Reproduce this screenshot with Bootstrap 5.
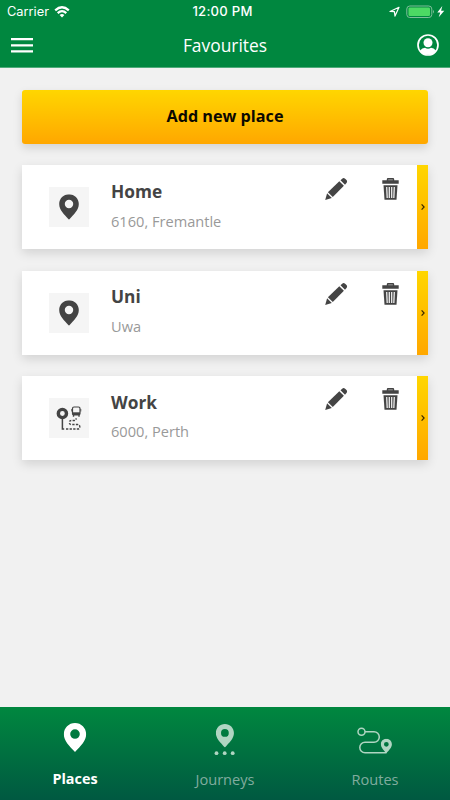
<!DOCTYPE html>
<html lang="en">
<head>
<meta charset="utf-8">
<meta name="viewport" content="width=device-width, initial-scale=1">
<title>Favourites</title>
<link href="https://cdn.jsdelivr.net/npm/bootstrap@5.3.0/dist/css/bootstrap.min.css" rel="stylesheet">
<style>
  body { background: #f1f1f1; font-family: "Open Sans", sans-serif; height: 800px; overflow: hidden; }
  svg { display: block; flex: none; }
  .app-header { background: #00873f; height: 68px; border-bottom: 1px solid #4fab7a; }
  .status-bar { height: 23px; font: 400 12.8px/23px Inter, sans-serif; padding: 0 5px 0 7px; }
  .status-bar > div { flex: 1 1 0; }
  .status-time { font-weight: 500; font-size: 13.1px; letter-spacing: .25px; padding-right: 7px; }
  .wifi { margin-left: 5px; }
  .title-bar { height: 44px; padding: 0 11px; }
  .title-bar h1 { font-size: 17.4px; font-weight: 400; line-height: 24px; }
  .icon-btn { border: 0; padding: 0; background: none; }
  .content { padding: 21.6px 22px 0; gap: 21.5px; }
  .btn-add { height: 54px; border: 0; border-radius: 3px; color: #0c0900; font-size: 16.2px; font-weight: 700;
    background: linear-gradient(#ffd600, #ffa700); box-shadow: 0 4px 10px rgba(0,0,0,.13); padding: 0; }
  .btn-add + .place { margin-top: .4px; }
  .place { height: 83.8px; border: 0; border-radius: 0; background: #fff; box-shadow: 0 4px 10px rgba(0,0,0,.13); }
  .place-thumb { background: #f5f5f5; margin: 21.800px 22px 0 27px; }
  .place-name { font-size: 17.3px; line-height: 24px; font-weight: 700; color: #444; margin: 14.5px 0 0; }
  .place-sub { font-size: 14.6px; line-height: 20px; color: #999; margin: 6.800px 0 0; }
  .place-actions { margin: 12.3px 18px 0 0; gap: 34px; }
  .place-open { width: 11px; background: linear-gradient(#ffd600, #ffa700); }
  .tab-bar { height: 93px; background: linear-gradient(#00873f, #005941); }
  .tab-item { color: #80ac9f; font-size: 14.6px; line-height: 20px; padding-top: 13px; }
  .tab-item.active { color: #fff; font-weight: 700; font-size: 14.4px; }
  .tab-item svg { margin-bottom: 8.800px; color: #b0d5c2; }
  .tab-item.active svg { color: #fff; }
</style>
</head>
<body class="d-flex flex-column">
<svg width="0" height="0" class="position-absolute" aria-hidden="true">
  <symbol id="pin" viewBox="0 0 20 26"><path fill="currentColor" fill-rule="evenodd" d="M10 0C4.400 0 0 4.400 0 10c0 6 5 10.500 10 16 5-5.500 10-10 10-16C20 4.400 15.600 0 10 0Zm0 5.600a4.300 4.300 0 1 1 0 8.600 4.300 4.300 0 0 1 0-8.600Z"/></symbol>
  <symbol id="pencil" viewBox="0 0 22 22"><g fill="#444"><path d="M2.900 14.200 14.300 3.200l4.600 4.600L7.800 19.100Z"/><path d="m15.500 2.300 1.700-1.600q1.400-1.200 2.900 0l1.400 1.300q1.200 1.500 0 2.900l-1.500 1.900Z"/><path d="m2.100 15.200 4.700 4.700L.2 22Z"/></g></symbol>
  <symbol id="trash" viewBox="0 0 17 22"><path fill="#444" d="M.3 2.300h4.500V1.200Q4.800 0 6 0h5q1.200 0 1.200 1.200v1.100h4.500v3.500H.3Z"/><path fill="#999" d="M6.200 1.300h4.600v1H6.200Z"/><path fill="#444" d="M1.500 7.300h14l-1 14.500h-12Z"/><path stroke="#eee" stroke-width="1.300" d="m4.700 9 .5 11M7.300 9v11M9.700 9v11M12.300 9l-.5 11"/></symbol>
  <symbol id="chevron" viewBox="0 0 4 6"><path fill="none" stroke="#3c2a00" stroke-width="1.200" d="m.6.400 2.500 2.600L.6 5.600"/></symbol>
</svg>

<header class="app-header text-white flex-shrink-0">
  <div class="status-bar d-flex align-items-center">
    <div class="d-flex align-items-center">
      <span>Carrier</span>
      <svg class="wifi" width="16" height="12" viewBox="0 0 16 12"><g fill="none" stroke="#fff" stroke-width="2.200"><path d="M1.200 4.400Q8-1.900 14.800 4.400"/><path d="M3.700 7.100Q8 3.100 12.300 7.100"/></g><path fill="#fff" d="M5.600 9Q8 6.900 10.400 9L8 11.500Z"/></svg>
    </div>
    <div class="status-time text-center text-nowrap">12:00 PM</div>
    <div class="d-flex align-items-center justify-content-end">
      <svg width="56" height="14" viewBox="389 4.500 56 14"><path fill="none" stroke="#fff" stroke-width="1.200" stroke-linejoin="round" d="m390 11 9-4.200-4 8.800-.6-4.500Z"/><rect x="406.800" y="5.500" width="25" height="11.500" rx="3" fill="none" stroke="#7fbf9a"/><rect x="408.500" y="7" width="21.500" height="8.500" rx="1.300" fill="#4cd964"/><path fill="#7fbf9a" d="M433 9.500q2 1.700 0 3.500Z"/><path fill="#fff" d="m442.300 5.500-5 6.400h2.900l-1.500 4.900 5.600-6.500h-3.200Z"/></svg>
    </div>
  </div>
  <div class="title-bar d-flex align-items-center justify-content-between">
    <button class="icon-btn" aria-label="Menu"><svg width="22" height="16" viewBox="0 0 22 16"><path stroke="#fff" stroke-width="2.200" d="M0 2.200h22M0 8.300h22M0 14.400h22"/></svg></button>
    <h1 class="m-0">Favourites</h1>
    <button class="icon-btn" aria-label="Account"><svg width="22" height="22" viewBox="0 0 22 22"><circle cx="11" cy="11" r="10" fill="none" stroke="#fff" stroke-width="1.700"/><circle cx="11" cy="8.700" r="4.500" fill="#fff"/><path fill="#fff" d="M3.200 16.500Q5 14 8 13.800q3 1.800 6 0 3 .2 4.800 2.700Q16 20.800 11 20.800T3.200 16.500Z"/></svg></button>
  </div>
</header>

<main class="content d-flex flex-column flex-grow-1">
  <button class="btn btn-add w-100">Add new place</button>

  <article class="card place flex-row">
    <div class="place-thumb align-self-start"><svg width="40" height="40" viewBox="0 0 40 40"><use href="#pin" x="10" y="7.200" width="20" height="25.500" color="#444"/></svg></div>
    <div class="flex-grow-1"><h2 class="place-name">Home</h2><p class="place-sub">6160, Fremantle</p></div>
    <div class="place-actions d-flex align-items-start">
      <button class="icon-btn" aria-label="Edit Home"><svg width="24" height="22"><use href="#pencil"/></svg></button>
      <button class="icon-btn" aria-label="Delete Home"><svg width="17" height="22"><use href="#trash"/></svg></button>
    </div>
    <div class="place-open d-flex align-items-center justify-content-center"><svg width="4" height="6"><use href="#chevron"/></svg></div>
  </article>

  <article class="card place flex-row">
    <div class="place-thumb align-self-start"><svg width="40" height="40" viewBox="0 0 40 40"><use href="#pin" x="10" y="7.200" width="20" height="25.500" color="#444"/></svg></div>
    <div class="flex-grow-1"><h2 class="place-name">Uni</h2><p class="place-sub">Uwa</p></div>
    <div class="place-actions d-flex align-items-start">
      <button class="icon-btn" aria-label="Edit Uni"><svg width="24" height="22"><use href="#pencil"/></svg></button>
      <button class="icon-btn" aria-label="Delete Uni"><svg width="17" height="22"><use href="#trash"/></svg></button>
    </div>
    <div class="place-open d-flex align-items-center justify-content-center"><svg width="4" height="6"><use href="#chevron"/></svg></div>
  </article>

  <article class="card place flex-row">
    <div class="place-thumb align-self-start"><svg width="40" height="40" viewBox="0 0 40 40"><g fill="none" stroke="#444"><circle cx="13.400" cy="15.500" r="4.100" stroke-width="3.400"/><path stroke-width="1.500" d="M13.400 20v11h1.800"/><path stroke-width="1.400" stroke-dasharray="2.300 1.300" d="M17 31h11.500q2.300 0 2.300-2.200t-2.300-2.300h-6q-2.200 0-2.200-2t2.200-2h2.800q1.800 0 1.800-2.300"/><rect x="23.500" y="9" width="7.500" height="8" rx="1.500" stroke-width="1.200"/><path stroke-width=".8" d="M22.700 11v2.500M31.800 11v2.500"/><path stroke-width="1.400" d="M24.500 17v1.800M30 17v1.800"/></g><path fill="#444" d="M23.500 14.300h7.500V17h-7.500Z"/></svg></div>
    <div class="flex-grow-1"><h2 class="place-name">Work</h2><p class="place-sub">6000, Perth</p></div>
    <div class="place-actions d-flex align-items-start">
      <button class="icon-btn" aria-label="Edit Work"><svg width="24" height="22"><use href="#pencil"/></svg></button>
      <button class="icon-btn" aria-label="Delete Work"><svg width="17" height="22"><use href="#trash"/></svg></button>
    </div>
    <div class="place-open d-flex align-items-center justify-content-center"><svg width="4" height="6"><use href="#chevron"/></svg></div>
  </article>
</main>

<nav class="tab-bar d-flex flex-shrink-0">
  <a href="#" class="tab-item active d-flex flex-column align-items-center flex-fill w-100 text-decoration-none">
    <svg width="40" height="40" viewBox="55 720 40 40"><use href="#pin" x="63.500" y="723" width="23" height="29"/></svg>Places</a>
  <a href="#" class="tab-item d-flex flex-column align-items-center flex-fill w-100 text-decoration-none">
    <svg width="40" height="40" viewBox="205 720 40 40"><use href="#pin" x="215.800" y="724" width="18.200" height="23.500"/><g fill="currentColor"><circle cx="216.500" cy="753.200" r="1.900"/><circle cx="224.700" cy="753.200" r="1.900"/><circle cx="232.700" cy="753.200" r="1.900"/></g></svg>Journeys</a>
  <a href="#" class="tab-item d-flex flex-column align-items-center flex-fill w-100 text-decoration-none">
    <svg width="40" height="40" viewBox="355 720 40 40"><g fill="none" stroke="currentColor" stroke-width="1.500"><circle cx="361.500" cy="731.700" r="3.500"/><path d="M365 731.700h9a5.300 5.300 0 0 1 0 10.600h-9a5.200 5.200 0 0 0 0 10.400h21.500"/></g><use href="#pin" x="380.700" y="738.800" width="11.300" height="14.400"/></svg>Routes</a>
</nav>
<script src="https://cdn.jsdelivr.net/npm/bootstrap@5.3.0/dist/js/bootstrap.bundle.min.js"></script>
</body>
</html>
